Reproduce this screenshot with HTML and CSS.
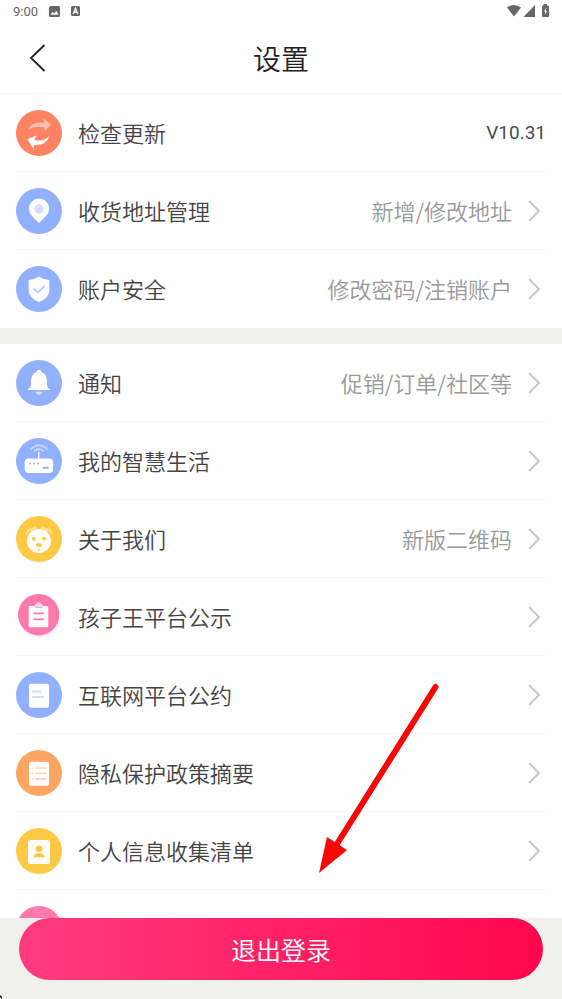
FILE: index.html
```html
<!DOCTYPE html>
<html lang="zh-CN">
<head>
<meta charset="utf-8">
<meta name="viewport" content="width=device-width, initial-scale=1">
<title>设置</title>
<link rel="stylesheet" href="styles.css">
</head>
<body>
<div class="app">
  <div class="status">
    <span>9:00</span>
    <svg width="11" height="11" viewBox="0 0 11 11"><rect width="11" height="11" rx="1.5" fill="#666"/><path d="M1.5 8.8 3.8 5.7 5.3 7.4 7.3 4.8 9.6 8.8Z" fill="#fff"/></svg>
    <svg width="9" height="10" viewBox="0 0 9 10"><rect width="9" height="10" rx="1.5" fill="#666"/><path d="M2.2 8 4.5 2.3 6.8 8M3.3 6.2H5.7" fill="none" stroke="#fff" stroke-width="1.3"/></svg>
    <svg class="signals" width="42" height="14" viewBox="0 0 42 14"><path d="M0 3.5Q7-1.5 14 3.5L7 12.5Z" fill="#666"/><path d="M16.500 13 28 1V13Z" fill="#666"/><path d="M35 2.500Q35 1.500 36.500 1.500V0H40V1.500Q42 1.500 42 2.500V12Q42 13 41 13H36Q35 13 35 12Z" fill="#666"/><path d="M39.500 3.500 37 7.500H38.300L37.800 11 40 7H38.700Z" fill="#fff"/></svg>
  </div>
  <header class="header">
    <button class="back" type="button" aria-label="返回"><svg width="17" height="28" viewBox="0 0 17 28"><path d="M15.500 1 2 14 15.500 27" fill="none" stroke="#222" stroke-width="1.8"/></svg></button>
    <h1>设置</h1>
  </header>
  <main class="content">
    <ul class="group">
      <li><a class="row" href="#">
        <svg class="icon" viewBox="0 0 46 46"><circle cx="23" cy="23" r="23" fill="#ff8363"/><path d="M12 19.500Q17 10.500 28 13L27.500 8.500 35 14.500 29 21 28.500 17.500Q19 15.500 12 19.500Z" fill="#ffc0ae"/><path d="M33.500 26Q30 36 17.700 35V39.500L11.500 29 20.500 25.500 18.500 30Q27 32 33.500 26Z" fill="#fff"/></svg>
        <span class="label">检查更新</span><span class="version">V10.31</span></a></li>
      <li><a class="row" href="#">
        <svg class="icon" viewBox="0 0 46 46"><circle cx="23" cy="23" r="23" fill="#91b0ff"/><path d="M23 35Q20 32.500 16 28A10.200 10.200 0 1 1 30 28Q26 32.500 23 35Z" fill="#fff"/><circle cx="23" cy="21" r="4.700" fill="#d3e0ff"/></svg>
        <span class="label">收货地址管理</span><span class="note">新增/修改地址</span><svg class="chevron" viewBox="0 0 18 22"><path d="M1 1 11 11 1 21"/></svg></a></li>
      <li><a class="row" href="#">
        <svg class="icon" viewBox="0 0 46 46"><circle cx="23" cy="23" r="23" fill="#91b0ff"/><path d="M23 10.500Q27 13.500 33.300 14V25Q33 31.500 23 36.300 13 31.500 12.700 25V14Q19 13.500 23 10.500Z" fill="#fff"/><path d="M17.500 22.500 22 26.500 28.500 20" fill="none" stroke="#b8ccff" stroke-width="1.800"/></svg>
        <span class="label">账户安全</span><span class="note">修改密码/注销账户</span><svg class="chevron" viewBox="0 0 18 22"><path d="M1 1 11 11 1 21"/></svg></a></li>
    </ul>
    <ul class="group">
      <li><a class="row" href="#">
        <svg class="icon" viewBox="0 0 46 46"><circle cx="23" cy="23" r="23" fill="#91b0ff"/><path d="M20.500 12Q21 9.800 23 9.800T25.500 12Q30.500 14 31 20V25Q31.300 28 34 29V30H12V29Q14.700 28 15 25V20Q15.500 14 20.500 12Z" fill="#fff"/><path d="M19.500 31.700H26.500Q25.500 34.700 23 34.700T19.500 31.700Z" fill="#d3e0ff"/></svg>
        <span class="label">通知</span><span class="note">促销/订单/社区等</span><svg class="chevron" viewBox="0 0 18 22"><path d="M1 1 11 11 1 21"/></svg></a></li>
      <li><a class="row" href="#">
        <svg class="icon" viewBox="0 0 46 46"><circle cx="23" cy="23" r="23" fill="#91b0ff"/><g fill="none" stroke="#c8d8ff" stroke-width="1.700"><path d="M14.500 11.500Q23 3 31.500 11.500"/><path d="M18 13.500Q23 8.500 28 13.500"/></g><path d="M22.700 13.700V22" stroke="#fff" stroke-width="1.600"/><rect x="8.700" y="20.500" width="28.500" height="14.500" rx="4" fill="#fff"/><g fill="#91b0ff"><circle cx="14" cy="25.600" r="1"/><circle cx="18" cy="25.600" r="1"/><circle cx="22" cy="25.600" r="1"/><rect x="26.700" y="28.700" width="6" height="2" rx=".5"/></g></svg>
        <span class="label">我的智慧生活</span><svg class="chevron" viewBox="0 0 18 22"><path d="M1 1 11 11 1 21"/></svg></a></li>
      <li><a class="row" href="#">
        <svg class="icon" viewBox="0 0 46 46"><circle cx="23" cy="23" r="23" fill="#ffc943"/><g fill="none" stroke="#ffe5a5" stroke-width="1.800"><path d="M10.500 18Q11.500 13.500 15 12.500M14.500 15.500Q17 12 20.500 11.500M35.500 18Q34.500 13.500 31 12.500M31.500 15.500Q29 12 25.500 11.500"/></g><circle cx="23" cy="25" r="12" fill="#fff"/><g fill="#ffc943"><circle cx="17.800" cy="22.700" r="2"/><circle cx="28" cy="22.700" r="2"/><ellipse cx="22.900" cy="29" rx="3" ry="2"/><circle cx="22.900" cy="33.800" r="1.100"/></g></svg>
        <span class="label">关于我们</span><span class="note">新版二维码</span><svg class="chevron" viewBox="0 0 18 22"><path d="M1 1 11 11 1 21"/></svg></a></li>
      <li><a class="row" href="#">
        <svg class="icon" viewBox="0 0 46 46"><circle cx="22.700" cy="23.500" r="20" fill="#fff0f5"/><circle cx="22.700" cy="20.700" r="20.700" fill="#ff79ad"/><path d="M18 13.500Q18 10 20.500 10 20.500 8 22.700 8T25 10Q27.500 10 27.500 13.500Z" fill="#ffd9e7"/><path d="M14 12H17.500Q18.500 14 20 14H25.500Q27 14 28 12H31Q32.300 12 32.300 13.300V32Q32.300 33.300 31 33.300H14Q12.700 33.300 12.700 32V13.300Q12.700 12 14 12Z" fill="#fff"/><path d="M17.300 19.300H28M17.300 25.300H28" stroke="#ff79ad" stroke-width="1.800"/></svg>
        <span class="label">孩子王平台公示</span><svg class="chevron" viewBox="0 0 18 22"><path d="M1 1 11 11 1 21"/></svg></a></li>
      <li><a class="row" href="#">
        <svg class="icon" viewBox="0 0 46 46"><circle cx="23" cy="23" r="23" fill="#91b0ff"/><rect x="13" y="11.800" width="20" height="24" rx="2" fill="#fff"/><path d="M16.300 19.500H25.300M16.300 25H28" stroke="#ccdaff" stroke-width="2"/></svg>
        <span class="label">互联网平台公约</span><svg class="chevron" viewBox="0 0 18 22"><path d="M1 1 11 11 1 21"/></svg></a></li>
      <li><a class="row" href="#">
        <svg class="icon" viewBox="0 0 46 46"><circle cx="23" cy="23" r="23" fill="#ffa564"/><rect x="13" y="11.800" width="20" height="24" rx="2" fill="#fff"/><path d="M15.500 18H17.500M19.300 18H30.700M15.500 23.400H17.500M19.300 23.400H30.700M15.500 28.800H17.500M19.300 28.800H30.700" stroke="#ffd5b8" stroke-width="1.700"/></svg>
        <span class="label">隐私保护政策摘要</span><svg class="chevron" viewBox="0 0 18 22"><path d="M1 1 11 11 1 21"/></svg></a></li>
      <li><a class="row" href="#">
        <svg class="icon" viewBox="0 0 46 46"><circle cx="23" cy="23" r="23" fill="#ffc943"/><rect x="12" y="12" width="22" height="24" rx="2.500" fill="#fff"/><circle cx="23" cy="20.800" r="3.300" fill="#ffc943"/><path d="M17.500 29.200Q18 25 23 25T28.700 29.200Z" fill="#ffc943"/></svg>
        <span class="label">个人信息收集清单</span><svg class="chevron" viewBox="0 0 18 22"><path d="M1 1 11 11 1 21"/></svg></a></li>
      <li><div class="row">
        <svg class="icon" viewBox="0 0 46 46"><circle cx="23" cy="23" r="23" fill="#ff79ad"/></svg></div></li>
    </ul>
  </main>
  <footer class="footer">
    <button class="logout" type="button">退出登录</button>
    <svg class="corner" width="3" height="4" viewBox="0 0 3 4"><path d="M0 0 2 2V4L0 2Z" fill="#111"/></svg>
  </footer>
  <svg class="pointer" width="122" height="192" viewBox="0 0 122 192"><path d="M117.500 5 19 162" stroke="#f80505" stroke-width="6" stroke-linecap="round"/><path d="M1 191 9 155 29 168Z" fill="#f80505"/></svg>
</div>
</body>
</html>
```
FILE: styles.css
```css
* {
  box-sizing: border-box;
}

body {
  margin: 0;
  background: #f0f1ec;
  color: #444;
  font-family: "Noto Sans CJK SC", sans-serif;
  font-weight: 350;
}

.app {
  position: relative;
  display: flex;
  flex-direction: column;
  height: 100vh;
  overflow: hidden;
}

.status {
  display: flex;
  flex: none;
  align-items: center;
  gap: 11px;
  height: 22px;
  padding: 0 13px;
  background: #fff;
  color: #666;
  font-family: Roboto, sans-serif;
  font-size: 13px;
  font-weight: 400;
}

.signals {
  margin-left: auto;
}

.header {
  display: grid;
  flex: none;
  grid-template-columns: 48px 1fr 48px;
  align-items: center;
  height: 72px;
  background: #fff;
  border-bottom: 1px solid #f7f7f7;
}

.header h1 {
  margin: 0;
  color: #222;
  font-size: 28px;
  font-weight: inherit;
  line-height: 40px;
  text-align: center;
}

.back {
  display: flex;
  justify-content: flex-end;
  padding: 0 2px 0 0;
  border: 0;
  background: none;
}

.content {
  flex: 1;
  min-height: 0;
  overflow: hidden;
}

.group {
  margin: 0 0 16px;
  padding: 0;
  background: #fff;
  list-style: none;
}

.row {
  position: relative;
  display: flex;
  align-items: center;
  gap: 16px;
  height: 78px;
  padding: 0 16px;
  color: inherit;
  font-size: 22px;
  line-height: 32px;
  text-decoration: none;
}

.group li:not(:last-child) .row::after {
  position: absolute;
  right: 16px;
  bottom: 0;
  left: 16px;
  height: 1px;
  background: #f8f8f8;
  content: "";
}

.icon {
  flex: none;
  width: 46px;
  height: 46px;
}

.label,
.note {
  padding-bottom: 2px;
}

.label {
  flex: 1;
}

.note {
  color: #999;
}

.version {
  color: #4c4c4c;
  font-family: Roboto, sans-serif;
  font-size: 19px;
  font-weight: 400;
}

.chevron {
  flex: none;
  width: 18px;
  height: 22px;
  fill: none;
  stroke: #c8c8c8;
  stroke-width: 2;
}

.footer {
  position: relative;
  flex: none;
  padding: 0 19px 19px;
}

.logout {
  display: block;
  width: 100%;
  height: 62px;
  padding: 0;
  border: 0;
  border-radius: 31px;
  background: linear-gradient(90deg, #ff3b80, #ff064c);
  color: #fff;
  font-family: inherit;
  font-size: 25px;
  font-weight: inherit;
  line-height: 36px;
}

.corner {
  position: absolute;
  bottom: 0;
  left: 0;
}

.pointer {
  position: absolute;
  bottom: 125px;
  left: 318px;
  fill: none;
  pointer-events: none;
}
```
